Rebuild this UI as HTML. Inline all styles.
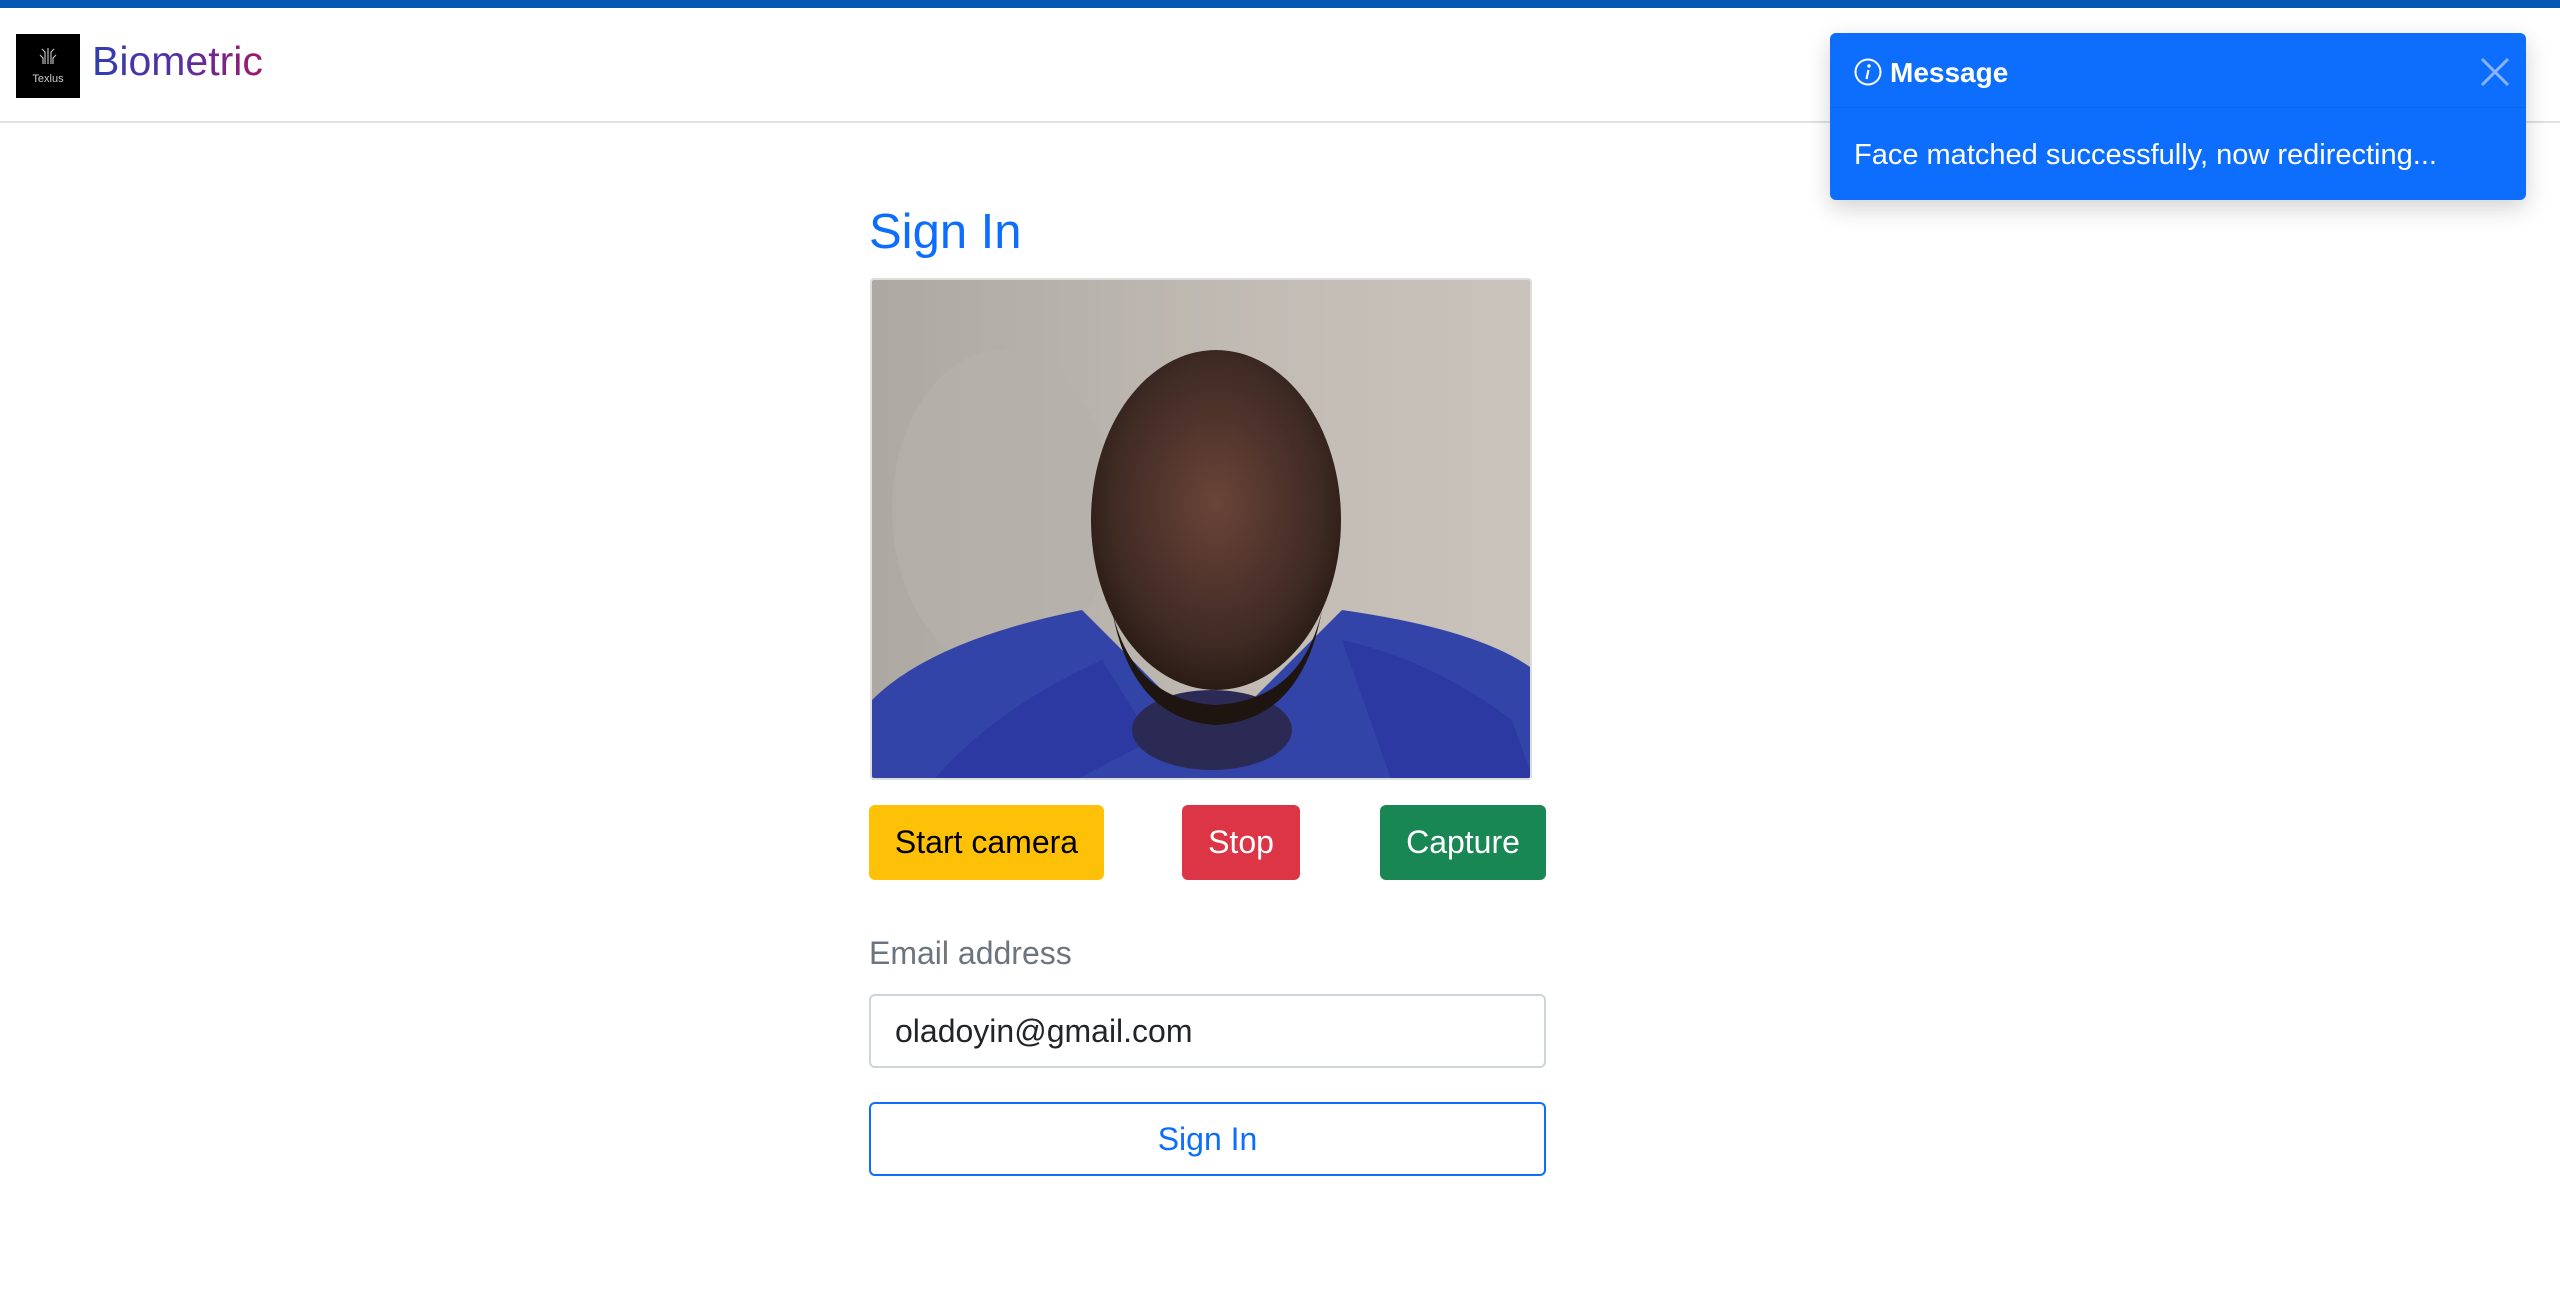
<!DOCTYPE html>
<html><head><meta charset="utf-8"><style>
*{box-sizing:border-box;margin:0;padding:0}
body{width:2560px;height:1304px;background:#fff;font-family:"Liberation Sans",Arial,sans-serif;position:relative;overflow:hidden}
.topbar{position:absolute;left:0;top:0;width:2560px;height:8px;background:#0456b6}
.hdr{position:absolute;left:0;top:8px;width:2560px;height:115px;border-bottom:2px solid #dee0e3}
.logo{position:absolute;left:16px;top:34px;width:64px;height:64px;background:#000;color:#ccc;font-size:11px;text-align:center}
.brand{position:absolute;left:92px;top:38px;font-size:41px;background:linear-gradient(90deg,#2f3fb0,#5a2fa0 55%,#a0186a);-webkit-background-clip:text;background-clip:text;color:transparent}
.toast{position:absolute;left:1830px;top:33px;width:696px;height:167px;background:#0d6efd;border-radius:6px;box-shadow:0 8px 24px rgba(0,0,0,.18);color:#fff}
.th{height:75px;border-bottom:1px solid rgba(0,0,0,.08);position:relative}
.th .t{position:absolute;left:60px;top:24px;font-weight:bold;font-size:28px}
.tb{position:absolute;left:24px;top:106px;font-size:29px}
h2{position:absolute;left:869px;top:204px;font-size:49px;font-weight:400;color:#0d6efd}
.vid{position:absolute;left:870px;top:278px;width:662px;height:502px;border:2px solid #ddd;border-radius:4px;overflow:hidden}
.btn{position:absolute;top:805px;height:75px;border-radius:6px;font-size:32px;line-height:75px;text-align:center}
label{position:absolute;left:869px;top:935px;font-size:32px;color:#6c757d}
.inp{position:absolute;left:869px;top:994px;width:677px;height:74px;border:2px solid #ced4da;border-radius:6px;font-size:32px;line-height:70px;padding-left:24px;color:#212529}
.sb{position:absolute;left:869px;top:1102px;width:677px;height:74px;border:2px solid #0d6efd;border-radius:6px;font-size:32px;line-height:70px;text-align:center;color:#0d6efd}
</style></head><body>
<div class="topbar"></div>
<div class="hdr"></div>
<div class="logo"><svg width="64" height="40" viewBox="0 0 64 40"><g stroke="#bbb" fill="none" stroke-width="1.2"><path d="M32 30V14M29 30V18l-3-3M35 30V18l3-3M27 30v-6l-3-3M37 30v-6l3-3"/></g></svg><div style="margin-top:-4px">Texlus</div></div>
<div class="brand">Biometric</div>
<div class="toast"><div class="th"><svg style="position:absolute;left:24px;top:25px" width="28" height="28" viewBox="0 0 28 28"><circle cx="14" cy="14" r="12.5" fill="none" stroke="#fff" stroke-width="2"/><circle cx="15" cy="8" r="1.7" fill="#fff"/><path d="M14.5 12l-2 9" stroke="#fff" stroke-width="2.2"/></svg><span class="t">Message</span><svg style="position:absolute;left:650px;top:24px" width="30" height="30" viewBox="0 0 30 30"><path d="M2 2L28 28M28 2L2 28" stroke="#8ab4ff" stroke-width="3"/></svg></div><div class="tb">Face matched successfully, now redirecting...</div></div>
<h2>Sign In</h2>
<div class="vid"><svg width="662" height="502" viewBox="0 0 662 502">
<defs><linearGradient id="bg" x1="0" x2="1"><stop offset="0" stop-color="#aea8a3"/><stop offset=".6" stop-color="#c2bcb5"/><stop offset="1" stop-color="#c9c3bb"/></linearGradient>
<radialGradient id="hd" cx=".5" cy=".45" r=".6"><stop offset="0" stop-color="#6a4438"/><stop offset=".7" stop-color="#3f2a24"/><stop offset="1" stop-color="#22160f"/></radialGradient></defs>
<rect width="662" height="502" fill="url(#bg)"/>
<ellipse cx="130" cy="230" rx="110" ry="160" fill="#b6b1ab" opacity=".7"/>
<path d="M0 502V420Q60 360 210 330L300 420Q340 450 380 420L470 330Q610 350 662 390V502Z" fill="#3344a8"/>
<path d="M60 502Q120 430 230 380L280 460 200 502ZM470 360Q560 380 640 440L662 502H520Z" fill="#2a37a0" opacity=".8"/>
<ellipse cx="340" cy="450" rx="80" ry="40" fill="#2b2a55"/>
<ellipse cx="344" cy="240" rx="125" ry="170" fill="url(#hd)"/>
<path d="M240 330Q260 440 344 445Q430 440 450 330Q430 420 344 425Q260 420 240 330Z" fill="#1e1410"/>
</svg></div>
<div class="btn" style="left:869px;width:235px;background:#ffc107;color:#000">Start camera</div>
<div class="btn" style="left:1182px;width:118px;background:#dc3545;color:#fff">Stop</div>
<div class="btn" style="left:1380px;width:166px;background:#198754;color:#fff">Capture</div>
<label>Email address</label>
<div class="inp">oladoyin@gmail.com</div>
<div class="sb">Sign In</div>
</body></html>
